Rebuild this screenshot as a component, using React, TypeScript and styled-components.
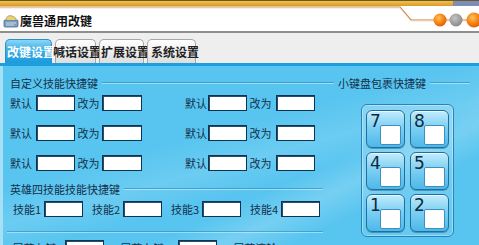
import React from "react";
import styled, { createGlobalStyle } from "styled-components";

const Global = createGlobalStyle`
  html, body { margin: 0; padding: 0; width: 479px; height: 245px; overflow: hidden; background: #5ac6f1; }
  * { box-sizing: border-box; }
  body { font-family: "Noto Sans CJK SC", "Noto Sans", sans-serif; }
`;

const Window = styled.div`
  width: 479px;
  height: 245px;
  display: flex;
  flex-direction: column;
  overflow: hidden;
`;

const TitleBar = styled.div`
  position: relative;
  flex: 0 0 33px;
  height: 33px;
  background: #fff;
  display: flex;
  align-items: flex-end;
  padding: 0 0 3px 3px;
  gap: 1px;
  border-bottom: 2px solid #8e8e8e;
`;

const Deco = styled.svg`
  position: absolute;
  left: 0;
  top: 0;
`;

const Title = styled.span`
  position: relative;
  font-size: 12px;
  font-weight: bold;
  color: #111;
  line-height: 14px;
`;

const TabStrip = styled.div`
  flex: 0 0 33px;
  height: 33px;
  background: #eeeeee;
  display: flex;
  align-items: flex-end;
  padding-left: 5px;
  gap: 3px;
  border-bottom: 3px solid #1c9fdc;
`;

const Tab = styled.div<{ $w: number; $active?: boolean; $shift: number }>`
  width: ${(p) => p.$w}px;
  height: 24px;
  border-radius: 5px 5px 0 0;
  border: 1px solid ${(p) => (p.$active ? "#2b8fc8" : "#a6a6a6")};
  border-bottom: none;
  background: ${(p) =>
    p.$active
      ? "linear-gradient(#8ad6f6, #3aaee6 45%, #1c9bdb)"
      : "linear-gradient(#ffffff, #ececec 60%, #dcdcdc)"};
  color: ${(p) => (p.$active ? "#fff" : "#222")};
  font-size: 12px;
  font-weight: bold;
  line-height: 24px;
  white-space: nowrap;
  overflow: visible;
  text-indent: ${(p) => p.$shift}px;
  position: relative;
  z-index: ${(p) => (p.$active ? 2 : 1)};
`;

const Content = styled.div`
  flex: 1 1 auto;
  min-height: 0;
  overflow: hidden;
  display: grid;
  grid-template-columns: 320px 1fr;
  align-items: start;
  border-left: 3px solid #a6e0f7;
  background:
    linear-gradient(155deg, transparent 62%, rgba(255,255,255,0.18) 70%, transparent 78%),
    linear-gradient(165deg, transparent 40%, rgba(255,255,255,0.12) 52%, transparent 62%),
    #58c5f0;
  color: #14304a;
  font-size: 11px;
`;

const LeftCol = styled.div`
  display: flex;
  flex-direction: column;
  padding: 10px 0 0 7px;
`;

const RightCol = styled.div`
  display: flex;
  flex-direction: column;
  padding: 10px 9px 0 0;
`;

const GroupHead = styled.div`
  height: 14px;
  display: flex;
  align-items: center;
  gap: 4px;
  white-space: nowrap;
  line-height: 14px;
`;

const Rule = styled.div<{ $w?: number }>`
  flex: ${(p) => (p.$w ? `0 0 ${p.$w}px` : "1")};
  height: 2px;
  border-top: 1px solid rgba(20, 110, 160, 0.45);
  border-bottom: 1px solid rgba(255, 255, 255, 0.45);
`;

const Rows = styled.div`
  display: flex;
  flex-direction: column;
  gap: 14px;
  margin-top: 5px;
`;

const Row = styled.div`
  display: grid;
  grid-template-columns: 175px 140px;
  height: 16px;
`;

const Pair = styled.div`
  display: flex;
  align-items: center;
`;

const Label = styled.span<{ $w: number }>`
  width: ${(p) => p.$w}px;
  flex: 0 0 ${(p) => p.$w}px;
  white-space: nowrap;
  line-height: 16px;
`;

const Input = styled.div<{ $w?: number }>`
  width: ${(p) => p.$w ?? 39}px;
  height: 16px;
  background: #fff;
  border: 1px solid #0d3553;
  box-shadow: inset 1px 1px 0 #264e6e;
`;

const Head2 = styled(GroupHead)`
  margin-top: 11px;
`;

const SkillRow = styled.div`
  display: flex;
  align-items: center;
  gap: 9px;
  margin-top: 5px;
  padding-left: 3px;
  height: 16px;
`;

const Sep = styled.div`
  margin: 14px 0 0 -3px;
  width: 316px;
  height: 2px;
  border-top: 1px solid rgba(20, 110, 160, 0.4);
  border-bottom: 1px solid rgba(255, 255, 255, 0.4);
`;

const BottomRow = styled.div`
  display: flex;
  align-items: center;
  margin-top: 7px;
  height: 16px;
  gap: 4px;
`;

const Keypad = styled.div`
  margin: 14px 0 0 38px;
  width: 93px;
  height: 133px;
  border: 1px solid #2b82b6;
  border-radius: 6px;
  background: linear-gradient(rgba(255,255,255,0.22), rgba(255,255,255,0.08));
  box-shadow: inset 0 0 0 1px rgba(255,255,255,0.35);
  padding: 5px 4px 4px 4px;
  display: grid;
  grid-template-columns: 39px 39px;
  grid-auto-rows: 38px;
  column-gap: 5px;
  row-gap: 4px;
`;

const Key = styled.div`
  display: grid;
  border: 1px solid #1e6e9e;
  border-radius: 6px;
  background: linear-gradient(#c2ecfc, #7ed0f3 45%, #4db8e9);
  box-shadow: inset 0 1px 0 rgba(255,255,255,0.7), 0 1px 0 rgba(10,70,110,0.4);
`;

const Digit = styled.span`
  grid-area: 1 / 1;
  align-self: start;
  justify-self: start;
  margin: 1px 0 0 3px;
  font-family: "DejaVu Sans", sans-serif;
  font-size: 17px;
  line-height: 18px;
  color: #0e2a40;
`;

const KeyBox = styled.div`
  grid-area: 1 / 1;
  align-self: end;
  justify-self: end;
  margin: 0 3px 2px 0;
  width: 21px;
  height: 20px;
  background: #fff;
  border: 1px solid #3c8fbf;
  border-radius: 2px;
`;

const TitleIcon = () => (
  <svg width="16" height="14" viewBox="0 0 16 14" style={{ position: "relative" }}>
    <rect x="1" y="6" width="14" height="7" rx="1" fill="#7f9ec0" stroke="#4d6a8c" strokeWidth="0.8" />
    <path d="M3 6 C3 2 7 1 9 2 C11 3 13 3 13 6" fill="#e6d27a" stroke="#a89030" strokeWidth="0.8" />
    <path d="M3 9 H13 M3 11 H11" stroke="#dfe8f2" strokeWidth="0.8" />
  </svg>
);

const Decoration = () => (
  <Deco width="479" height="33" viewBox="0 0 479 33">
    <defs>
      <linearGradient id="gold" x1="0" y1="0" x2="0" y2="1">
        <stop offset="0" stopColor="#f2c24a" />
        <stop offset="1" stopColor="#d99a2a" />
      </linearGradient>
      <radialGradient id="org" cx="0.4" cy="0.35" r="0.7">
        <stop offset="0" stopColor="#ffc060" />
        <stop offset="0.6" stopColor="#f57f10" />
        <stop offset="1" stopColor="#d85a00" />
      </radialGradient>
      <radialGradient id="gry" cx="0.4" cy="0.35" r="0.7">
        <stop offset="0" stopColor="#c4c4c4" />
        <stop offset="1" stopColor="#858585" />
      </radialGradient>
    </defs>
    <rect x="0" y="0" width="479" height="1" fill="#6a5a2a" />
    <rect x="0" y="1" width="453" height="5" fill="url(#gold)" />
    <rect x="453" y="1" width="26" height="5" fill="#7e8db6" />
    <path d="M0 7 H400 L411 20 H472" stroke="#c9843e" strokeWidth="1.2" fill="none" />
    <path d="M0 8 H400 L411 21 H472" stroke="#f3d8b8" strokeWidth="0.8" fill="none" />
    <circle cx="440" cy="20" r="6.5" fill="url(#org)" />
    <circle cx="456" cy="20" r="6.5" fill="url(#gry)" />
    <circle cx="474" cy="20" r="7.5" fill="url(#org)" />
  </Deco>
);

const pairRows = [0, 1, 2];

export default function App() {
  return (
    <Window>
      <Global />
      <TitleBar>
        <Decoration />
        <TitleIcon />
        <Title>魔兽通用改键</Title>
      </TitleBar>
      <TabStrip>
        <Tab $w={47} $active $shift={1}>改键设置</Tab>
        <Tab $w={41} $shift={-3}>喊话设置</Tab>
        <Tab $w={45} $shift={1}>扩展设置</Tab>
        <Tab $w={49} $shift={3}>系统设置</Tab>
      </TabStrip>
      <Content>
        <LeftCol>
          <GroupHead>
            <span>自定义技能快捷键</span>
            <Rule />
          </GroupHead>
          <Rows>
            {pairRows.map((r) => (
              <Row key={r}>
                <Pair>
                  <Label $w={26}>默认</Label>
                  <Input />
                  <Label $w={27}>&nbsp;改为</Label>
                  <Input $w={40} />
                </Pair>
                <Pair>
                  <Label $w={23}>默认</Label>
                  <Input />
                  <Label $w={29}>&nbsp;改为</Label>
                  <Input />
                </Pair>
              </Row>
            ))}
          </Rows>
          <Head2>
            <span>英雄四技能技能快捷键</span>
            <Rule />
          </Head2>
          <SkillRow>
            {[1, 2, 3, 4].map((n) => (
              <Pair key={n}>
                <Label $w={31}>技能{n}</Label>
                <Input />
              </Pair>
            ))}
          </SkillRow>
          <Sep />
          <BottomRow>
            <Label $w={51}>&nbsp;屏蔽左键</Label>
            <Input />
            <Label $w={66}>&nbsp;&nbsp;&nbsp;&nbsp;&nbsp;屏蔽右键</Label>
            <Input />
            <Label $w={60}>&nbsp;&nbsp;&nbsp;&nbsp;&nbsp;屏蔽滚轮</Label>
          </BottomRow>
        </LeftCol>
        <RightCol>
          <GroupHead>
            <Rule $w={11} />
            <span>小键盘包裹快捷键</span>
            <Rule />
          </GroupHead>
          <Keypad>
            {["7", "8", "4", "5", "1", "2"].map((d) => (
              <Key key={d}>
                <Digit>{d}</Digit>
                <KeyBox />
              </Key>
            ))}
          </Keypad>
        </RightCol>
      </Content>
    </Window>
  );
}
